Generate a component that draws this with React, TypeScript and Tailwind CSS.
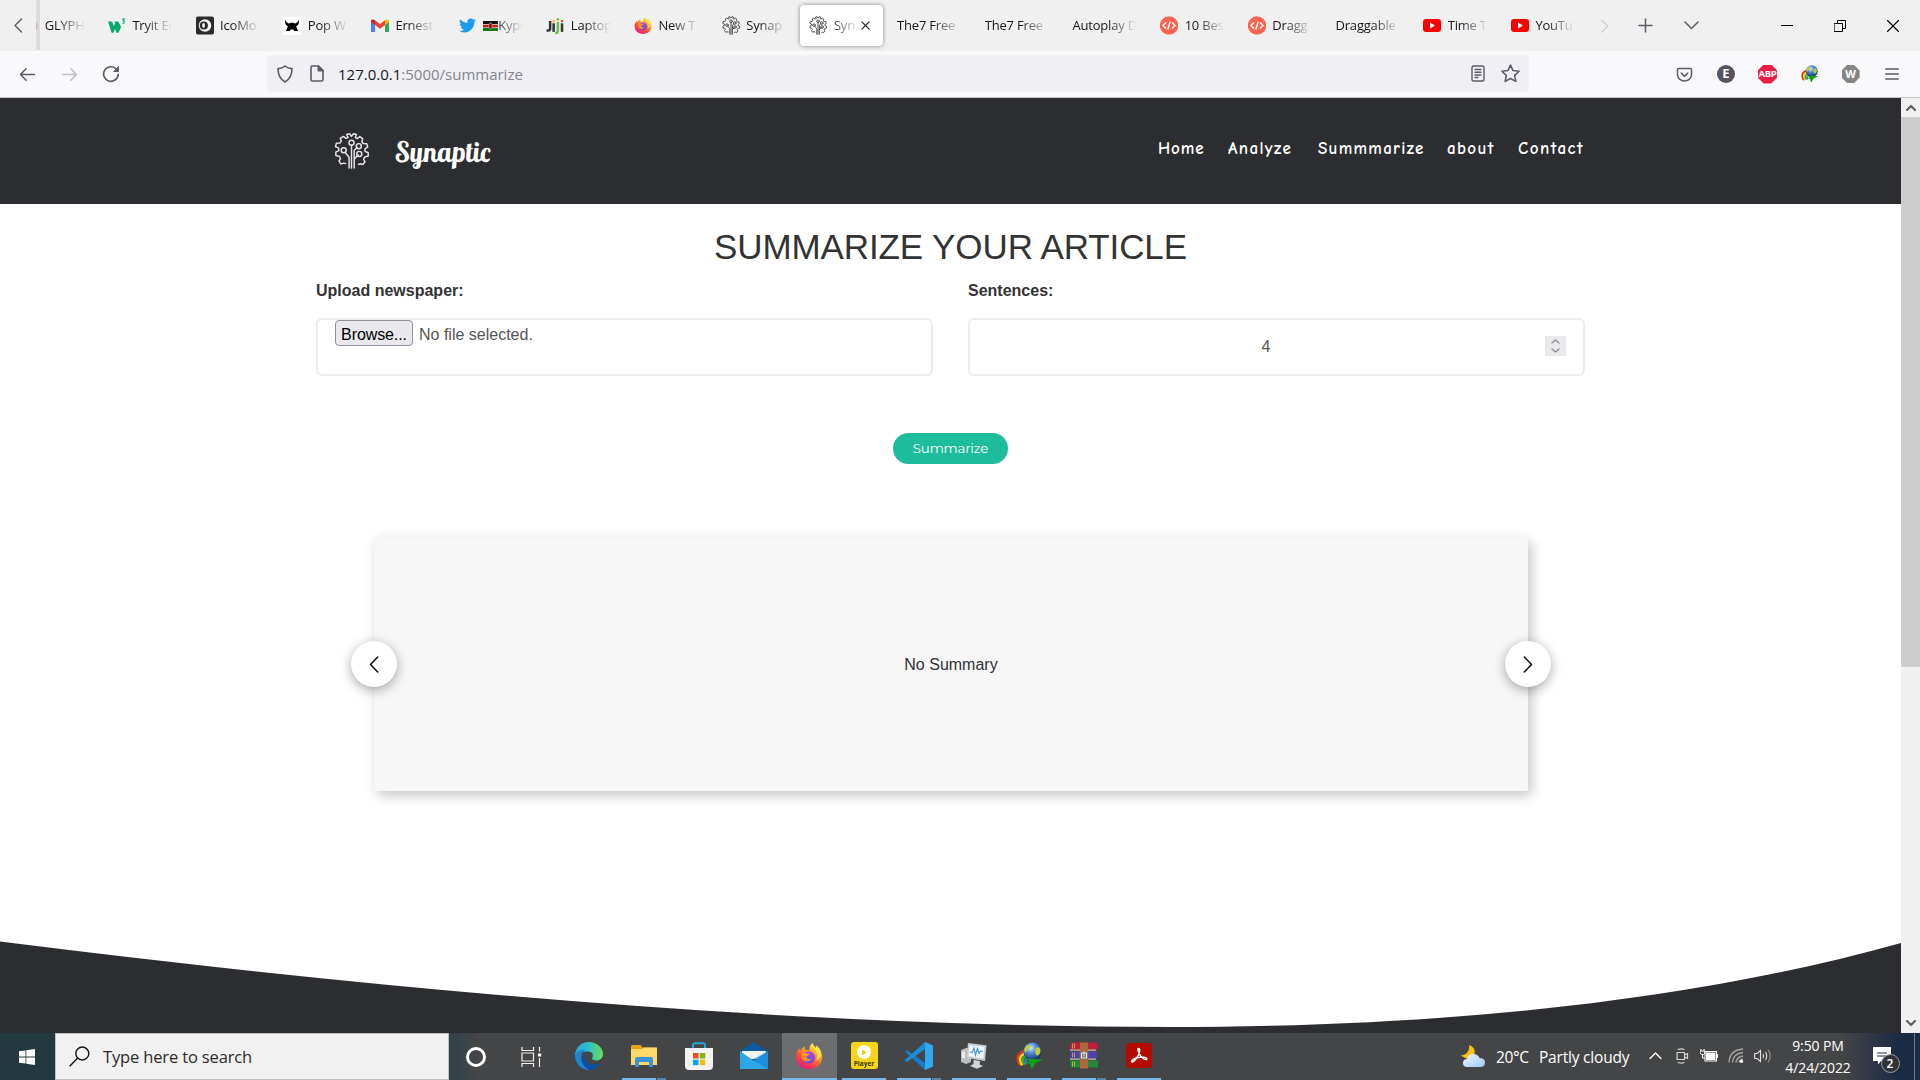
import React from "react";
import { FaTwitter } from "react-icons/fa";

type P = { className?: string };

/* ---------- brand and application icons ---------- */

const Firefox = ({ className = "" }: P) => (
  <svg viewBox="0 0 32 32" className={className}>
    <defs>
      <linearGradient id="ffBody" x1="0.8" y1="0.05" x2="0.25" y2="1">
        <stop offset="0" stopColor="#fff44f" />
        <stop offset="0.35" stopColor="#ffa21f" />
        <stop offset="0.65" stopColor="#ff4a3f" />
        <stop offset="1" stopColor="#e31587" />
      </linearGradient>
      <linearGradient id="ffCore" x1="0.6" y1="0" x2="0.4" y2="1">
        <stop offset="0" stopColor="#b547e8" />
        <stop offset="1" stopColor="#5a4fdc" />
      </linearGradient>
    </defs>
    <path d="M20 1c1 3 2 4 4 6 .5-1 .5-2 .3-3 4 3 6.700 8 6.700 13.500C31 25.500 24.500 31 16 31S1 25 1 17C1 13 3 9.500 5 7l1 3c1-2 3-4 5-5l.5 4c2 0 4 .5 5 1C16 6 17 3 20 1z" fill="url(#ffBody)" />
    <circle cx="16" cy="17.500" r="7" fill="url(#ffCore)" />
    <path d="M8 13c2-1 4-1 5 0 1.500 0 3 0 3.500 1-.3 1.500-3 1.500-3.500 3 .5 2.500 3 3.500 6 2.500-1.500 2.500-6 3.500-9 1.500-2.500-2-3-5-2-8z" fill="#ff9a25" />
    <path d="M20 1c-1 4 2 7 4 9.500 2 3 2.500 7 0 10.500 4-1 6-5 5.500-9-1-4-3-6-5.200-8 .2 1 .2 2-.3 3-2-2-3-3-4-6z" fill="#ffe14a" />
  </svg>
);

const Gear = ({ className = "", width = 1.7 }: P & { width?: number }) => (
  <svg viewBox="0 0 36 37" className={className} fill="none" stroke="currentColor" strokeWidth={width} strokeLinejoin="round" strokeLinecap="round">
    <path d="M12 31.500l-2-.5-3 .8-1.800-3 1.500-2.300-1-2.300-3.800-1v-3.500l3-1.500V15.500L1.500 14l1-3.500 3.800-.3 1.200-1.700L6.500 5.500 9.500 3.500l3 2 2-.8L13 1.500l3-.7 2 2.700 2-2.700 3 .7-1 3.200 2 1 2.500-2 3 2-.8 3.300 1.300 1.800 3.700.2 1 3.300-2.800 2v2.500l3.300 1.500v3.300l-3.800 1.200-1 2.300 1.500 2.500-2 2.700-3.200-.6-1.500.7" />
    <path d="M15.500 36V25l-4-5M18 36V12.500M20.800 36V18l3-3M20.800 27l4-4.500" />
    <circle cx="18" cy="10" r="2.600" />
    <circle cx="25.500" cy="13.500" r="2.600" />
    <circle cx="26" cy="21.500" r="2.600" />
    <circle cx="10" cy="17.800" r="2.600" />
  </svg>
);

const IdmGlobe = ({ className = "" }: P) => (
  <svg viewBox="0 0 32 32" className={className}>
    <defs>
      <radialGradient id="idmBall" cx="0.4" cy="0.3" r="0.75">
        <stop offset="0" stopColor="#d8ecf8" />
        <stop offset="0.4" stopColor="#4a8bd2" />
        <stop offset="1" stopColor="#0d2558" />
      </radialGradient>
    </defs>
    <path d="M6 27Q-2 15 11 10" fill="none" stroke="#e0331a" strokeWidth="3" />
    <path d="M8.500 26.500Q1 16.500 13 12.500" fill="none" stroke="#ffd51f" strokeWidth="3" />
    <path d="M11 26Q5 18.500 15 15" fill="none" stroke="#37ad1f" strokeWidth="3" />
    <path d="M13.500 25.500Q9 20.500 17 18" fill="none" stroke="#2f7fd0" strokeWidth="2.500" />
    <circle cx="20" cy="11" r="10.500" fill="url(#idmBall)" />
    <path d="M14 4c3-1.500 5 0 3.500 2.500S13 9 12.500 11.500 10 10 11 7.500 12.500 4.500 14 4zM25 6c3-.5 4.500 2 4 5s-3 5-4.500 4S22 7 25 6z" fill="#c3cb3d" />
    <path d="M14 19l18 1-8.500 4L19 31l-2-6-4-1.500 3-1.500z" fill="#12a00c" />
  </svg>
);

const W3 = () => (
  <svg viewBox="0 0 20 18" className="h-[18px] w-[20px]">
    <path d="M0 4h4.500l2 5 1.500-3-1-2h4.500l3 6-3 6.500h-2L8 12l-2 4.500H4z" fill="#04aa6d" />
    <path d="M15.500 1.200h2.700l-1.400 2c2 .2 2 3.300-.8 3" fill="none" stroke="#04aa6d" strokeWidth="1.200" />
  </svg>
);

const IcoMoon = () => (
  <svg viewBox="0 0 19 19" className="h-[19px] w-[19px]">
    <rect width="19" height="19" rx="2" fill="#2b2b2b" />
    <circle cx="9.500" cy="9.500" r="6.600" fill="#f2f2f2" />
    <circle cx="8.300" cy="9.500" r="4.300" fill="#2b2b2b" />
    <ellipse cx="8" cy="9.500" rx="1.500" ry="2.600" fill="#f2f2f2" />
  </svg>
);

const Viking = () => (
  <svg viewBox="0 0 18 18" className="h-[18px] w-[18px]">
    <rect width="18" height="18" fill="#fff" />
    <path d="M2.200 2.800Q3 6 5.500 6.500L9 5.500l3.500 1Q15 6 15.800 2.800 17 7 13.200 9.500L15 14H11.200L10.300 12.500H7.700L6.800 14H3L4.800 9.500Q1 7 2.200 2.800z" fill="#000" />
  </svg>
);

const Gmail = () => (
  <svg viewBox="0 0 18 14" className="h-[14px] w-[18px]">
    <path d="M0 2.500V13h4V6z" fill="#4285f4" />
    <path d="M14 6v7h4V2.500z" fill="#34a853" />
    <path d="M14 1.500V6l4-3V2c0-1.500-2-2-3-1.200z" fill="#fbbc04" />
    <path d="M4 6V1.300l5 3.800 5-3.800V6L9 9.800z" fill="#ea4335" />
    <path d="M0 2v1l4 3V1.500L3 .8C2 0 0 .5 0 2z" fill="#c5221f" />
  </svg>
);

const Jiji = () => (
  <svg viewBox="0 0 20 18" className="h-[18px] w-[20px]" fill="none" strokeWidth="2.800">
    <path d="M4.600 3.500v8.500q0 2.500-4 2" stroke="#30363c" />
    <path d="M8.500 6v9.500" stroke="#30363c" />
    <path d="M13.200 4.500v9.500q0 3-3 2.800" stroke="#6fbe44" />
    <path d="M17.800 6v9.500" stroke="#30363c" />
    <circle cx="8.500" cy="3.500" r="1.500" fill="#fbb03b" />
    <circle cx="13.200" cy="1.600" r="1.500" fill="#6fbe44" />
    <circle cx="17.800" cy="3.500" r="1.500" fill="#ef4a3b" />
  </svg>
);

const CodeDot = () => (
  <svg viewBox="0 0 18 19" className="h-[19px] w-[18px]">
    <circle cx="9" cy="9.500" r="9.200" fill="#fa6450" />
    <path d="M6 6.500l-3 3 3 3M12 6.500l3 3-3 3M10.200 5.500l-2.400 8" fill="none" stroke="#fff" strokeWidth="1.400" />
  </svg>
);

const YouTube = () => (
  <svg viewBox="0 0 18 13" className="h-[13px] w-[18px]">
    <rect width="18" height="13" rx="3" fill="#f00" />
    <path d="M7 3.600v5.800l5-2.900z" fill="#fff" />
  </svg>
);

const Kenya = () => (
  <svg viewBox="0 0 15 10" className="h-[10px] w-[15px] shrink-0">
    <rect width="15" height="3.200" fill="#111" />
    <rect y="3" width="15" height="4" fill="#fff" />
    <rect y="3.600" width="15" height="2.800" fill="#c1200f" />
    <rect y="6.900" width="15" height="3.100" fill="#0b7a12" />
    <ellipse cx="7.500" cy="5" rx="1.800" ry="3.200" fill="#7a1010" stroke="#ddd" strokeWidth=".5" />
  </svg>
);

/* ---------- tab strip ---------- */

type Tab = { icon?: React.ReactNode; text: string; active?: boolean; flag?: boolean };

const tabs: Tab[] = [
  { icon: <span className="h-[12px] w-[18px] rounded-r-full bg-[#c8232c]" />, text: "GLYPH" },
  { icon: <W3 />, text: "Tryit Ed" },
  { icon: <IcoMoon />, text: "IcoMo" },
  { icon: <Viking />, text: "Pop W" },
  { icon: <Gmail />, text: "Ernest" },
  { icon: <FaTwitter className="h-[17px] w-[17px] text-[#1d9bf0]" />, text: "Kype", flag: true },
  { icon: <Jiji />, text: "Laptop" },
  { icon: <Firefox className="h-[19px] w-[19px]" />, text: "New T" },
  { icon: <Gear className="h-[19px] w-[19px] text-[#4a4a4a]" width={1.9} />, text: "Synap" },
  { icon: <Gear className="h-[19px] w-[19px] text-[#4a4a4a]" width={1.9} />, text: "Syn", active: true },
  { text: "The7 Free" },
  { text: "The7 Free" },
  { text: "Autoplay D" },
  { icon: <CodeDot />, text: "10 Bes" },
  { icon: <CodeDot />, text: "Dragg" },
  { text: "Draggable" },
  { icon: <YouTube />, text: "Time T" },
  { icon: <YouTube />, text: "YouTu" },
];

const TabItem = ({ icon, text, active, flag }: Tab) => (
  <div className="w-[87.7px] shrink-0">
    <div className={`flex h-[41px] w-[83.500px] items-center pl-[9.500px] ${active ? "rounded bg-white shadow-[0_0_4px_rgba(0,0,0,0.45)]" : ""}`}>
      {icon && <div className="mr-[6.500px] flex w-[18px] shrink-0 items-center justify-center">{icon}</div>}
      <div
        className={`flex items-center whitespace-nowrap pt-[1px] text-[13px] text-[#15141a] [mask-image:linear-gradient(to_left,transparent,black_28px)] ${
          active ? "w-[25px]" : icon ? "w-[40px]" : "w-[64px]"
        }`}
      >
        {flag && <Kenya />}
        <span className="tracking-[-0.2px]">{text}</span>
      </div>
      {active && (
        <svg viewBox="0 0 10 10" className="ml-[2px] h-[9px] w-[9px]" stroke="#222" strokeWidth="1.300">
          <path d="M.7.7l8.600 8.600M9.300.7L.7 9.300" />
        </svg>
      )}
    </div>
  </div>
);

const Stroke = ({ d, className, color = "#5b5b66", w = 1.6, box = "0 0 18 18" }: { d: string; className: string; color?: string; w?: number; box?: string }) => (
  <svg viewBox={box} className={className} fill="none" stroke={color} strokeWidth={w} strokeLinecap="round" strokeLinejoin="round">
    <path d={d} />
  </svg>
);

const TabStrip = () => (
  <div className="flex h-[51px] bg-[#f0f0f0]">
    <div className="flex w-[36px] shrink-0 items-center pl-[14px]">
      <Stroke d="M7.500 1L1 7.500 7.500 14" box="0 0 9 15" className="h-[15px] w-[9px]" w={1.400} />
    </div>
    <div className="relative w-[1550px] shrink-0 overflow-hidden pt-[5px]">
      <div className="-ml-[25.300px] flex">
        {tabs.map((t, i) => (
          <TabItem key={i} {...t} />
        ))}
      </div>
      <div className="absolute left-0 top-0 h-[50px] w-[4px] bg-gradient-to-r from-[#dadada] to-[#d4d4d4] opacity-80" />
    </div>
    <div className="flex w-[36px] items-center justify-center">
      <Stroke d="M1.500 1L8 7.500 1.500 14" box="0 0 9 15" className="h-[14px] w-[9px]" w={1.400} color="#cfcfd2" />
    </div>
    <div className="flex w-[46px] items-center justify-center">
      <Stroke d="M7.500 1v13M1 7.500h13" box="0 0 15 15" className="h-[15px] w-[15px]" w={1.500} />
    </div>
    <div className="flex w-[46px] items-center justify-center">
      <Stroke d="M1 1l6.500 6.500L14 1" box="0 0 15 9" className="h-[9px] w-[15px]" w={1.500} />
    </div>
    <div className="ml-[46px] flex w-[53px] items-center justify-center">
      <div className="h-px w-[12px] bg-black" />
    </div>
    <div className="flex w-[53px] items-center justify-center">
      <Stroke d="M.5 3.500h8v8h-8zM3.500 3.500v-3h8v8h-3" box="0 0 12 12" className="h-[12px] w-[12px]" w={1} color="#000" />
    </div>
    <div className="flex w-[53px] items-center justify-center">
      <Stroke d="M.5.5l11 11M11.500.5l-11 11" box="0 0 12 12" className="h-[12px] w-[12px]" w={1.100} color="#000" />
    </div>
  </div>
);

const ToolSlot = ({ children }: { children: React.ReactNode }) => <div className="flex w-[41.600px] items-center justify-center">{children}</div>;

const Toolbar = () => (
  <div className="flex h-[47px] border-b border-[#c6c6c8] bg-[#f9f9fb] pr-[7px]">
    <div className="flex w-[267px] items-center pl-[6px]">
      <div className="flex w-[42px] justify-center">
        <Stroke d="M16.500 8H1.500M7.500 1.800L1.500 8l6 6.200" box="0 0 18 16" className="h-[15px] w-[17px]" />
      </div>
      <div className="flex w-[42px] justify-center">
        <Stroke d="M1.500 8h15M10.500 1.800l6 6.200-6 6.200" box="0 0 18 16" className="h-[15px] w-[17px]" color="#bdbdc2" />
      </div>
      <div className="flex w-[42px] justify-center">
        <svg viewBox="0 0 18 18" className="h-[18px] w-[18px]" fill="none" stroke="#5b5b66" strokeWidth="1.700" strokeLinecap="round">
          <path d="M16.200 9.500a7.300 7.300 0 1 1-2-5.500" />
          <path d="M16.500 2v4.500H12z" fill="#5b5b66" stroke="#5b5b66" strokeWidth="1" strokeLinejoin="round" />
        </svg>
      </div>
    </div>
    <div className="mt-[4px] flex h-[37px] w-[1262px] items-center rounded bg-[#f0f0f4] pl-[9px] pr-[3px]">
      <Stroke d="M9 1c2 1.700 4.500 2.400 7 2.600 0 6-1.500 10.500-7 13.400C3.500 14.100 2 9.600 2 3.600 4.500 3.400 7 2.700 9 1z" className="h-[18px] w-[18px]" />
      <svg viewBox="0 0 14 17" className="ml-[16px] h-[17px] w-[14px]" fill="none" stroke="#5b5b66" strokeWidth="1.600" strokeLinejoin="round">
        <path d="M2.500 1h6l4.500 4.500v9q0 1.500-1.500 1.500h-9Q1 16 1 14.500v-12Q1 1 2.500 1z" />
        <path d="M8.300 1v4.700H13z" fill="#5b5b66" />
      </svg>
      <div className="ml-[14px] whitespace-nowrap pt-[2px] text-[15px] text-[#85848c]">
        <span className="text-[#15141a]">127.0.0.1</span>:5000/summarize
      </div>
      <div className="ml-auto flex w-[32px] justify-center">
        <Stroke d="M2.500 1h9Q13 1 13 2.500v12q0 1.500-1.500 1.500h-9Q1 16 1 14.500v-12Q1 1 2.500 1zM4 4.500h6M4 7.300h6M4 10h6M4 12.500h3" box="0 0 14 17" className="h-[17px] w-[14px]" w={1.400} />
      </div>
      <div className="flex w-[32px] justify-center">
        <Stroke d="M9 1l2.400 5.200 5.800.7-4.300 3.900 1.200 5.700L9 13.700l-5.100 2.800 1.200-5.700L.8 6.900l5.800-.7z" className="h-[19px] w-[19px]" w={1.500} />
      </div>
    </div>
    <div className="ml-auto flex">
      <ToolSlot>
        <Stroke d="M3 1.500h12q1.500 0 1.500 1.500v5a7.500 7 0 0 1-15 0V3q0-1.500 1.500-1.500zM5.500 6.500L9 10l3.500-3.500" box="0 0 18 16" className="h-[15px] w-[17px]" />
      </ToolSlot>
      <ToolSlot>
        <div className="flex h-[18px] w-[18px] items-center justify-center rounded-full bg-[#55545f] text-[13px] font-bold text-white">E</div>
      </ToolSlot>
      <ToolSlot>
        <div className="flex h-[19px] w-[19px] items-center justify-center bg-[#ed1e45] text-[9.500px] font-bold tracking-[-0.4px] text-white [clip-path:polygon(30%_0,70%_0,100%_30%,100%_70%,70%_100%,30%_100%,0_70%,0_30%)]">ABP</div>
      </ToolSlot>
      <ToolSlot>
        <IdmGlobe className="h-[18px] w-[19px]" />
      </ToolSlot>
      <ToolSlot>
        <div className="flex h-[18px] w-[18px] items-center justify-center bg-[#858585] text-[11px] font-bold text-white [clip-path:polygon(30%_0,70%_0,100%_30%,100%_70%,70%_100%,30%_100%,0_70%,0_30%)]">W</div>
      </ToolSlot>
      <ToolSlot>
        <Stroke d="M.7 1h12.600M.7 6h12.600M.7 11h12.600" box="0 0 14 12" className="h-[12px] w-[14px]" w={1.300} />
      </ToolSlot>
    </div>
  </div>
);

/* ---------- web page ---------- */

const Header = () => (
  <header className="flex h-[106px] bg-[#2c2d31] pl-[334px]">
    <Gear className="mt-[35px] h-[36px] w-[35px] text-[#e6e6e6]" width={1.5} />
    <div className="ml-[27px] mt-[36px] w-[120px] -skew-x-[-7deg] whitespace-nowrap font-['Lobster','Liberation_Serif',serif] text-[28px] leading-[36px] text-white">Synaptic</div>
    <nav className="ml-auto mr-[317px] mt-[39px] flex justify-end font-['Comic_Neue','Comic_Sans_MS','Noto_Sans',sans-serif] text-[17px] font-bold leading-[24px] text-white">
      <a className="w-[70px] tracking-[0.9px]">Home</a>
      <a className="w-[90px] tracking-[1.400px]">Analyze</a>
      <a className="w-[129px] tracking-[1.300px]">Summmarize</a>
      <a className="w-[71px] tracking-[1.400px]">about</a>
      <a className="w-[66px] tracking-[1.500px]">Contact</a>
    </nav>
  </header>
);

const ArrowButton = ({ d, className }: { d: string; className: string }) => (
  <button className={`absolute top-[104px] flex h-[46px] w-[46px] items-center justify-center rounded-full bg-white shadow-[0_3px_12px_rgba(0,0,0,0.35)] ${className}`}>
    <Stroke d={d} box="0 0 10 17" className="h-[17px] w-[10px]" w={1.600} color="#111" />
  </button>
);

const Page = () => (
  <div className="flex h-[935px] w-[1901px] flex-col bg-white font-['Liberation_Sans',sans-serif] text-[16px] text-[#333]">
    <Header />
    <h1 className="mt-[23px] text-center text-[35px] leading-[40px] tracking-[-0.1px]">SUMMARIZE YOUR ARTICLE</h1>
    <div className="mt-[12px] flex gap-[35px] px-[316px]">
      <div className="flex-1">
        <div className="h-[24px] font-bold leading-[24px]">Upload newspaper:</div>
        <div className="mt-[15px] flex h-[58px] items-start rounded-[6px] border-2 border-[#ebebeb] pl-[17px]">
          <div className="flex h-[26px] w-[78px] items-center justify-center rounded border border-[#8f8f9d] bg-[#e9e9ed] pt-[3px] tracking-[-0.1px] text-black">Browse...</div>
          <div className="ml-[6px] leading-[29px] text-[#555]">No file selected.</div>
        </div>
      </div>
      <div className="flex-1">
        <div className="h-[24px] font-bold leading-[24px]">Sentences:</div>
        <div className="mt-[15px] flex h-[58px] items-center rounded-[6px] border-2 border-[#ebebeb] pl-[17px] pr-[17px]">
          <div className="flex-1 text-center text-[#555]">4</div>
          <div className="mb-[2px] flex h-[20px] w-[21px] flex-col items-center justify-between bg-[#e9e9ed] py-[3px]">
            <Stroke d="M1 4l3.500-3L8 4" box="0 0 9 5" className="h-[5px] w-[9px]" w={1.400} color="#8f8f9d" />
            <Stroke d="M1 1l3.500 3L8 1" box="0 0 9 5" className="h-[5px] w-[9px]" w={1.400} color="#8f8f9d" />
          </div>
        </div>
      </div>
    </div>
    <button className="mt-[57px] h-[31px] w-[115px] self-center rounded-full bg-[#1dbc9c] font-['Montserrat','Inter',sans-serif] text-[13.300px] tracking-[-0.15px] text-white">Summarize</button>
    <div className="relative ml-[374px] mt-[73px] flex h-[254px] w-[1154px] items-center justify-center bg-[#f7f7f7] shadow-[4px_5px_12px_rgba(0,0,0,0.2),0_0_14px_rgba(0,0,0,0.03)]">
      <span className="pt-[2px]">No Summary</span>
      <ArrowButton d="M8.700 1L1.500 8.500l7.200 7.500" className="-left-[23px]" />
      <ArrowButton d="M1.300 1l7.200 7.500L1.300 16" className="-right-[23px]" />
    </div>
    <svg viewBox="0 0 1901 93" className="mt-auto h-[93px] w-[1901px]">
      <path d="M0 1.500Q680 87 1170 87C1457 87 1701 59 1901 3V93H0z" fill="#2c2d31" />
    </svg>
  </div>
);

const Scrollbar = () => (
  <div className="flex h-[935px] w-[19px] flex-col items-center bg-[#f0f0f0]">
    <div className="flex h-[19px] items-center">
      <Stroke d="M1 6l4-4 4 4" box="0 0 10 7" className="h-[7px] w-[10px]" w={2.200} color="#606060" />
    </div>
    <div className="h-[550px] w-full bg-[#cdcdcd]" />
    <div className="mt-auto flex h-[19px] items-center">
      <Stroke d="M1 1l4 4 4-4" box="0 0 10 7" className="h-[7px] w-[10px]" w={2.200} color="#606060" />
    </div>
  </div>
);

/* ---------- taskbar ---------- */

const Edge = () => (
  <svg viewBox="0 0 28 28" className="h-[28px] w-[28px]">
    <defs>
      <linearGradient id="edgeTop" x1="0" y1="0.5" x2="1" y2="0.5">
        <stop offset="0" stopColor="#2aa7e0" />
        <stop offset="0.5" stopColor="#2fc1c8" />
        <stop offset="1" stopColor="#6fdc52" />
      </linearGradient>
    </defs>
    <path d="M0 14C0 6 6 0 14 0s14 6 14 12c0 4-3 6.500-6.500 6.500-3 0-5-1-4.500-2.500 2-2 1-6.500-4-6.500C7 9.500 2 11 0 14z" fill="url(#edgeTop)" />
    <path d="M0 14c1-5 6-7 11-6.500-4 2-5.500 6-4.500 11 1 4 4 7.500 8 9.500C6 28 0 21 0 14z" fill="#1b86d6" />
    <path d="M11 11c-3 7 2 14 14 10.500-2 4-6 6.500-10.500 6.500C8 26 4.500 16 11 11z" fill="#0f4fa0" />
  </svg>
);

const Explorer = () => (
  <svg viewBox="0 0 26 22" className="h-[22px] w-[26px]">
    <path d="M0 1.500Q0 0 1.500 0h8l2 2.500H24V8H0z" fill="#e5a417" />
    <path d="M0 4h11l2-1.500h13V20H0z" fill="#ffd869" />
    <path d="M4 22v-7.500Q4 12 6.500 12h13q2.500 0 2.500 2.500V22h-4v-5H8v5z" fill="#3a92d9" />
  </svg>
);

const Store = () => (
  <svg viewBox="0 0 28 28" className="h-[28px] w-[28px]">
    <path d="M8 8V3.500Q8 1.300 10 1.300h8q2 0 2 2.200V8" fill="none" stroke="#2aa5dc" strokeWidth="2" />
    <path d="M0 6h28v18q0 4-4 4H4q-4 0-4-4z" fill="#f2f2f2" />
    <path d="M8 11h5.500v5.500H8z" fill="#f25022" />
    <path d="M14.700 11h5.500v5.500h-5.500z" fill="#7fba00" />
    <path d="M8 17.700h5.500v5.500H8z" fill="#00a4ef" />
    <path d="M14.700 17.700h5.500v5.500h-5.500z" fill="#ffb900" />
  </svg>
);

const Mail = () => (
  <svg viewBox="0 0 28 27" className="h-[27px] w-[28px]">
    <path d="M0 9L14 0l14 9v4H0z" fill="#0f5a9e" />
    <path d="M2 9h24v8H2z" fill="#f4f4f4" />
    <path d="M0 9l14 10L28 9v18H0z" fill="#2ba7e8" />
    <path d="M28 9v18L12 17.500z" fill="#1479cf" opacity=".55" />
  </svg>
);

const Player = () => (
  <div className="flex h-[27px] w-[27px] flex-col items-center rounded-[3px] bg-[#f7d617] pt-[3px]">
    <div className="flex h-[14px] w-[14px] shrink-0 items-center justify-center rounded-full bg-white">
      <svg viewBox="0 0 6 8" className="h-[7px] w-[6px]">
        <path d="M.8.5l5 3.500-5 3.500z" fill="#f2c900" />
      </svg>
    </div>
    <span className="mt-[1px] text-[6.500px] font-bold leading-[8px] text-[#3c3200]">Player</span>
  </div>
);

const VsCode = () => (
  <svg viewBox="0 0 28 28" className="h-[28px] w-[28px]">
    <path d="M0 9.500l2-1.500 18 13v7L2 11.500z" fill="#0f7fcc" />
    <path d="M0 18.500L2 20l18-13V0L1 17z" fill="#1b8edb" />
    <path d="M20 0l7 3q1 .5 1 1.500v19q0 1-1 1.500l-7 3z" fill="#30a9f0" />
  </svg>
);

const Monitor = () => (
  <svg viewBox="0 0 26 26" className="h-[26px] w-[26px]">
    <path d="M0 7l5-2h5v14l-5 2-5-2z" fill="#b9bec1" />
    <path d="M1 9l3-.7v7L1 15z" fill="#eceeef" />
    <path d="M7 0l18.500 2.200L24 18 5.500 15z" fill="#c4cacd" />
    <path d="M8.500 2l15 1.800-1.200 12L7.300 13.300z" fill="#eef6fb" />
    <path d="M9 9.500l2.500-.5 1.500-4 1.500 7 2-6.500 1.500 5 1.500-2.500 2.500.5" fill="none" stroke="#3f93d2" strokeWidth="1.100" />
    <path d="M12.500 17l6.500 1-.5 3.500 3.500 1.500-6 2.800-7-2.800 3.500-2z" fill="#d3d7da" />
  </svg>
);

const WinRar = () => (
  <svg viewBox="0 0 28 26" className="h-[27px] w-[28px]">
    <path d="M1 0h25l2 2v5H0z" fill="#b8203c" />
    <path d="M0 9h27v7H0z" fill="#4843ae" />
    <path d="M0 18h28v7H1z" fill="#1f8a3c" />
    <path d="M0 7h26v1.200H0zM0 16h26v1.200H0z" fill="#cdbfa4" />
    <path d="M2.500 1v5M4.500 1v5M2.500 10v5M4.500 10v5M2.500 19v5M4.500 19v5" stroke="#e9b832" strokeWidth=".8" />
    <path d="M10 0h8v26h-8z" fill="#b0683a" />
    <path d="M9.500 9h9v8h-9z" fill="#7b6b5a" />
    <path d="M11.500 10.500h5v5h-5z" fill="none" stroke="#e6e6e6" strokeWidth="1.200" />
    <path d="M14 9v5" stroke="#eee" strokeWidth="1" />
  </svg>
);

const Acrobat = () => (
  <svg viewBox="0 0 26 25" className="h-[25px] w-[26px]">
    <rect width="26" height="25" rx="4" fill="#b30b00" />
    <path d="M12.500 5.500c2 0 1.500 5-2 9.500-2 3-4.500 5-5 3.500-.4-1.500 4-4 8.500-4.300 4-.4 7 .3 6.800 1.800-.3 1.600-4.800-.5-6.800-4-1.800-3-2.800-6.500-1.500-6.500z" fill="none" stroke="#fff" strokeWidth="1.500" />
  </svg>
);

type App = { icon: React.ReactNode; run?: "one" | "many" | "active" };

const apps: App[] = [
  { icon: <Edge /> },
  { icon: <Explorer />, run: "many" },
  { icon: <Store /> },
  { icon: <Mail /> },
  { icon: <Firefox className="h-[28px] w-[28px]" />, run: "active" },
  { icon: <Player />, run: "one" },
  { icon: <VsCode />, run: "many" },
  { icon: <Monitor />, run: "one" },
  { icon: <IdmGlobe className="h-[28px] w-[28px]" />, run: "one" },
  { icon: <WinRar />, run: "many" },
  { icon: <Acrobat />, run: "one" },
];

const AppSlot = ({ icon, run }: App) => (
  <div className={`flex w-[55px] flex-col items-center ${run === "active" ? "bg-[#6c6d6f]" : ""}`}>
    <div className="flex h-[45px] items-center">{icon}</div>
    {run === "active" && <div className="h-[2px] w-full bg-[#76b9ed]" />}
    {run === "one" && <div className="h-[2px] w-[44px] bg-[#76b9ed]" />}
    {run === "many" && (
      <div className="flex h-[2px] w-[44px]">
        <div className="w-[34px] bg-[#76b9ed]" />
        <div className="ml-px flex-1 bg-[#5585ab]" />
      </div>
    )}
  </div>
);

const TraySlot = ({ children }: { children: React.ReactNode }) => <div className="flex w-[27px] shrink-0 items-center justify-center">{children}</div>;

const Tray = () => (
  <div className="ml-auto flex w-[460px] bg-[linear-gradient(to_right,transparent_380px,#1b2a45_440px)] text-white">
    <svg viewBox="0 0 26 23" className="mt-[12px] h-[23px] w-[26px] shrink-0">
      <defs>
        <linearGradient id="cloud" x1="0" y1="0" x2="1" y2="1">
          <stop offset="0" stopColor="#f1f8ff" />
          <stop offset="1" stopColor="#9ccaf3" />
        </linearGradient>
      </defs>
      <path d="M9 0c5 1.500 7 6 5 10s-9 5-13 0c5 1 9-4 8-10z" fill="#fbc112" />
      <path d="M7 22q-4-.3-4-4t4-4q1-5 6-5t6.500 4Q25 13 25 17.500T20 22z" fill="url(#cloud)" />
    </svg>
    <div className="ml-[10px] w-[43px] shrink-0 pt-[12px] text-[15.500px] leading-[24px] tracking-[-0.4px]">20°C</div>
    <div className="w-[102.500px] shrink-0 whitespace-nowrap pt-[12px] text-[15.500px] leading-[24px] tracking-[-0.2px]">Partly cloudy</div>
    <div className="flex pb-[2px]">
      <TraySlot>
        <Stroke d="M1 6.500L6.500 1 12 6.500" box="0 0 13 8" className="h-[8px] w-[13px]" w={1.300} color="#fff" />
      </TraySlot>
      <TraySlot>
        <Stroke d="M2 4.500h7.500v7H2zM9.500 7l3-1.500v5l-3-1.500M3 1.500q3.500-1.300 6 0M3 14.500q3.500 1.300 6 0" box="0 0 14 16" className="h-[16px] w-[14px]" w={1.200} color="#d4d4d4" />
      </TraySlot>
      <TraySlot>
        <svg viewBox="0 0 18 13" className="h-[13px] w-[18px]" fill="none" stroke="#fff">
          <rect x="5" y="2.500" width="11.500" height="9.500" />
          <rect x="6" y="3.500" width="9.500" height="7.500" fill="#fff" stroke="none" />
          <path d="M17.500 5v4" />
          <path d="M1 0v2M4 0v2M0 2h5v2L3.500 5.500h-2L0 4zM2.500 5.500V9H5" />
        </svg>
      </TraySlot>
      <TraySlot>
        <svg viewBox="0 0 16 15" className="h-[15px] w-[16px]" fill="none" stroke="#a5a5a5" strokeWidth="1.300">
          <path d="M1 14.500Q1.500 2 15 1M4.500 14.500Q5 5.500 15 4.500M8 14.500Q8.500 9 15 8M11 14.500q.5-3 4-3.500" />
          <circle cx="13.500" cy="13.300" r="1.600" fill="#fff" stroke="none" />
        </svg>
      </TraySlot>
      <TraySlot>
        <svg viewBox="0 0 18 16" className="h-[16px] w-[18px]" fill="none" stroke="#e2e2e2" strokeWidth="1.100">
          <path d="M.7 5.500h2.500L6.500 2.500v11l-3.300-3H.7z" />
          <path d="M9 6q1.200 2 0 4M11.500 4q2.400 4 0 8" />
          <path d="M14 1.500q4.500 6.500 0 13" stroke="#969696" />
        </svg>
      </TraySlot>
    </div>
    <div className="w-[83px] shrink-0 whitespace-nowrap pt-[2px] text-center text-[14px] leading-[22px] tracking-[-0.1px]">
      <div>9:50 PM</div>
      <div>4/24/2022</div>
    </div>
    <div className="relative w-[54px] shrink-0">
      <svg viewBox="0 0 18 18" className="ml-[13px] mt-[14px] h-[18px] w-[18px]">
        <path d="M0 0h18v14H8l-3 3.500V14H0z" fill="#fff" />
        <path d="M4 6h10M4 9h10" stroke="#1b2a45" strokeWidth="1.200" />
      </svg>
      <div className="absolute left-[21px] top-[21px] flex h-[19px] w-[19px] items-center justify-center rounded-full border border-[#9a9a9a] bg-[#303338] text-[12px] font-semibold leading-none">2</div>
    </div>
    <div className="w-px shrink-0 bg-[#6f7889]" />
  </div>
);

const Taskbar = () => (
  <div className="flex h-[47px] bg-[#444547]">
    <div className="flex w-[55px] items-center justify-center bg-[#22393f] pr-[1px]">
      <svg viewBox="0 0 16 16" className="h-[16px] w-[16px]" fill="#fff">
        <path d="M0 2.300L6.500 1.400v6.100H0zM7.300 1.300L16 0v7.500H7.300zM0 8.400h6.500v6.200L0 13.700zM7.300 8.400H16V16l-8.700-1.200z" />
      </svg>
    </div>
    <div className="flex w-[394px] items-center border border-[#bfbfbf] bg-[#f1f1f1] pl-[13px]">
      <svg viewBox="0 0 21 21" className="h-[21px] w-[21px]" fill="none" stroke="#111" strokeWidth="1.400">
        <circle cx="13.300" cy="7.500" r="6.500" />
        <path d="M8.700 12.100L.7 20.300" />
      </svg>
      <div className="ml-[13px] pt-[2px] text-[16.500px] tracking-[-0.15px] text-[#2b2b2b]">Type here to search</div>
    </div>
    <div className="flex w-[54.500px] items-center justify-center bg-[linear-gradient(to_right,#30424a,#444547_30px)]">
      <div className="h-[20px] w-[20px] rounded-full border-[3px] border-white" />
    </div>
    <div className="flex w-[58px] items-center pl-[17px]">
      <svg viewBox="0 0 21 20" className="h-[20px] w-[21px]" fill="none" stroke="#f0f0f0" strokeWidth="1.200">
        <path d="M1 0v3.500h11.500V0M1 20v-3.500h11.500V20M1 6h11.500v8H1zM18.500 0v4.500M18.500 11v9" />
        <path d="M17 6.500h3.200v3H17z" fill="#fff" stroke="none" />
      </svg>
    </div>
    {apps.map((a, i) => (
      <AppSlot key={i} {...a} />
    ))}
    <Tray />
  </div>
);

export default function App() {
  return (
    <div className="flex h-[1080px] w-[1920px] flex-col overflow-hidden bg-white font-['Segoe_UI','Open_Sans',sans-serif]">
      <TabStrip />
      <Toolbar />
      <div className="flex h-[935px]">
        <Page />
        <Scrollbar />
      </div>
      <Taskbar />
    </div>
  );
}
